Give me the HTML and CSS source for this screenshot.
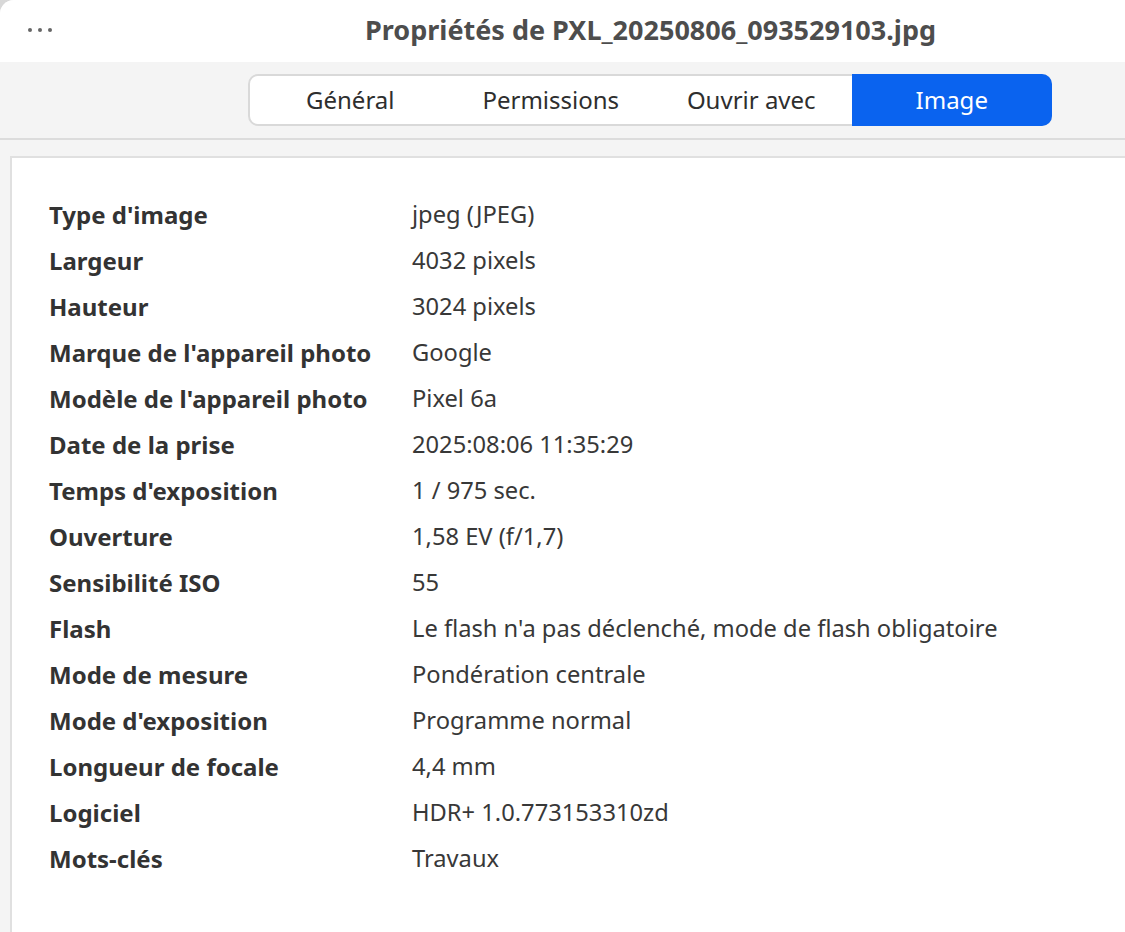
FILE: index.html
```html
<!DOCTYPE html>
<html lang="fr">
<head>
    <meta charset="UTF-8">
    <title>Propriétés de PXL_20250806_093529103.jpg</title>
    <link rel="stylesheet" href="styles.css">
</head>
<body>
    <div class="window">
        <header class="titlebar">
            <div class="menu-dots"><span></span><span></span><span></span></div>
            <h1 class="title">Propriétés de PXL_20250806_093529103.jpg</h1>
        </header>
        <nav class="toolbar">
            <div class="tabs">
                <div class="tab">Général</div>
                <div class="tab">Permissions</div>
                <div class="tab">Ouvrir avec</div>
                <div class="tab active">Image</div>
            </div>
        </nav>
        <main class="content">
            <div class="panel">
                <dl class="props">
                    <dt>Type d'image</dt><dd>jpeg (JPEG)</dd>
                    <dt>Largeur</dt><dd>4032 pixels</dd>
                    <dt>Hauteur</dt><dd>3024 pixels</dd>
                    <dt>Marque de l'appareil photo</dt><dd>Google</dd>
                    <dt>Modèle de l'appareil photo</dt><dd>Pixel 6a</dd>
                    <dt>Date de la prise</dt><dd>2025:08:06 11:35:29</dd>
                    <dt>Temps d'exposition</dt><dd>1 / 975 sec.</dd>
                    <dt>Ouverture</dt><dd>1,58 EV (f/1,7)</dd>
                    <dt>Sensibilité ISO</dt><dd>55</dd>
                    <dt>Flash</dt><dd>Le flash n'a pas déclenché, mode de flash obligatoire</dd>
                    <dt>Mode de mesure</dt><dd>Pondération centrale</dd>
                    <dt>Mode d'exposition</dt><dd>Programme normal</dd>
                    <dt>Longueur de focale</dt><dd>4,4 mm</dd>
                    <dt>Logiciel</dt><dd>HDR+ 1.0.773153310zd</dd>
                    <dt>Mots-clés</dt><dd>Travaux</dd>
                </dl>
            </div>
        </main>
    </div>
</body>
</html>
```

FILE: styles.css
```css
* {
    box-sizing: border-box;
}
html, body {
    height: 100%;
}
body {
    margin: 0;
    background-color: #d8d8d8;
    font-family: "Noto Sans", "Open Sans", sans-serif;
    color: #333333;
    overflow: hidden;
}
.window {
    height: 100%;
    background-color: #f4f4f4;
    border-top-left-radius: 14px;
    overflow: hidden;
    display: flex;
    flex-direction: column;
}
.titlebar {
    height: 62px;
    background-color: #ffffff;
    display: flex;
    align-items: center;
}
.menu-dots {
    display: flex;
    gap: 6px;
    margin-left: 28px;
    margin-bottom: 2px;
}
.menu-dots span {
    width: 4px;
    height: 4px;
    border-radius: 50%;
    background-color: #666666;
}
.title {
    margin: 0 0 4px 313px;
    font-size: 27px;
    font-weight: 700;
    color: #4d4d4d;
}
.toolbar {
    height: 78px;
    padding-top: 12px;
    padding-left: 248px;
    border-bottom: 2px solid #dcdcdc;
}
.tabs {
    display: flex;
    width: 804px;
    height: 52px;
    background-color: #ffffff;
    border: 2px solid #d9d9d9;
    border-radius: 10px;
}
.tab {
    flex: 1;
    display: flex;
    align-items: center;
    justify-content: center;
    padding-bottom: 2px;
    font-size: 24px;
    color: #2e2e2e;
}
.tab.active {
    margin: -2px -2px -2px 0;
    background-color: #0a63ef;
    color: #ffffff;
    border-radius: 0 10px 10px 0;
}
.content {
    flex: 1;
    padding: 16px 0 0 10px;
}
.panel {
    height: 100%;
    background-color: #ffffff;
    border-top: 2px solid #e0e0e0;
    border-left: 2px solid #e0e0e0;
    padding: 40px 0 0 37px;
}
.props {
    margin: 0;
    display: grid;
    grid-template-columns: 363px auto;
    grid-auto-rows: 46px;
    font-size: 24px;
    line-height: 33px;
}
.props dt {
    font-weight: 700;
    color: #333333;
}
.props dd {
    margin: 0;
    font-size: 23.7px;
    color: #383838;
}
```
